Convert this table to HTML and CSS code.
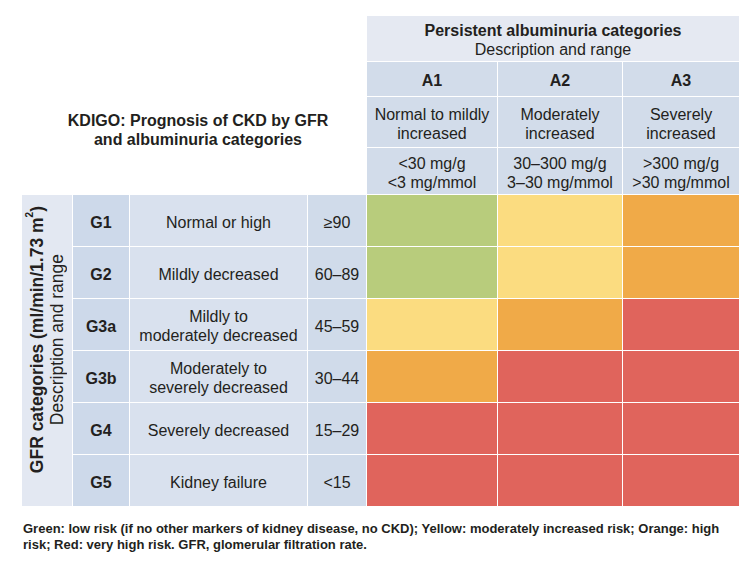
FILE: index.html
```html
<!DOCTYPE html>
<html>
<head>
<meta charset="utf-8">
<link rel="stylesheet" href="styles.css">
</head>
<body>
<div class="page">
  <div class="grid">
    <div class="title"><span>KDIGO: Prognosis of CKD by GFR<br>and albuminuria categories</span></div>
    <div class="h-top"><span><b>Persistent albuminuria categories</b><br>Description and range</span></div>
    <div class="h-a c5"><b>A1</b></div>
    <div class="h-a c6"><b>A2</b></div>
    <div class="h-a c7"><b>A3</b></div>
    <div class="h-a c5"><span>Normal to mildly<br>increased</span></div>
    <div class="h-a c6"><span>Moderately<br>increased</span></div>
    <div class="h-a c7"><span>Severely<br>increased</span></div>
    <div class="h-a c5"><span>&lt;30 mg/g<br>&lt;3 mg/mmol</span></div>
    <div class="h-a c6"><span>30–300 mg/g<br>3–30 mg/mmol</span></div>
    <div class="h-a c7"><span>&gt;300 mg/g<br>&gt;30 mg/mmol</span></div>

    <div class="band"><div class="band-text"><b>GFR categories (ml/min/1.73 m<sup>2</sup>)</b><br>Description and range</div></div>

    <div class="g">G1</div><div class="d">Normal or high</div><div class="r">≥90</div>
    <div class="cell green"></div><div class="cell yellow"></div><div class="cell orange"></div>

    <div class="g">G2</div><div class="d">Mildly decreased</div><div class="r">60–89</div>
    <div class="cell green"></div><div class="cell yellow"></div><div class="cell orange"></div>

    <div class="g">G3a</div><div class="d"><span>Mildly to<br>moderately decreased</span></div><div class="r">45–59</div>
    <div class="cell yellow"></div><div class="cell orange"></div><div class="cell red"></div>

    <div class="g">G3b</div><div class="d"><span>Moderately to<br>severely decreased</span></div><div class="r">30–44</div>
    <div class="cell orange"></div><div class="cell red"></div><div class="cell red"></div>

    <div class="g">G4</div><div class="d">Severely decreased</div><div class="r">15–29</div>
    <div class="cell red"></div><div class="cell red"></div><div class="cell red"></div>

    <div class="g">G5</div><div class="d">Kidney failure</div><div class="r">&lt;15</div>
    <div class="cell red"></div><div class="cell red"></div><div class="cell red"></div>
  </div>
  <p class="note">Green: low risk (if no other markers of kidney disease, no CKD); Yellow: moderately increased risk; Orange: high risk; Red: very high risk. GFR, glomerular filtration rate.</p>
</div>
</body>
</html>
```

FILE: styles.css
```css
html, body {
  margin: 0;
  padding: 0;
  background: #ffffff;
}

body {
  font-family: "Liberation Sans", Arial, sans-serif;
  color: #231f20;
  font-size: 16px;
}

.page {
  padding: 16px 0 0 22px;
}

.grid {
  display: grid;
  grid-template-columns: 50px 56px 177px 58px 130px 124px 116px;
  grid-template-rows: 45px 34px 50px 46px repeat(6, 51px);
  gap: 1px;
  width: 717px;
}

.grid > div {
  display: flex;
  align-items: center;
  justify-content: center;
  text-align: center;
  line-height: 19px;
  padding-top: 3px;
  box-sizing: border-box;
}

.title {
  grid-column: 1 / 5;
  grid-row: 2 / 5;
  font-weight: bold;
  padding-left: 8px;
}

.h-top {
  grid-column: 5 / 8;
  grid-row: 1;
  background: #e5e9f2;
}

.h-a {
  background: #d2dcea;
}

.c5 { grid-column: 5; }
.c6 { grid-column: 6; }
.c7 { grid-column: 7; }

.grid > .band {
  grid-column: 1;
  grid-row: 5 / 11;
  background: #e3e8f2;
  padding-top: 0;
}

.band-text {
  writing-mode: vertical-rl;
  transform: rotate(180deg);
  font-size: 17.5px;
  line-height: 20px;
  white-space: nowrap;
  margin-bottom: 22px;
}

.band-text sup {
  font-size: 10px;
  line-height: 0;
  vertical-align: 7px;
}

.g {
  grid-column: 2;
  background: #cdd9ea;
  font-weight: bold;
}

.d {
  grid-column: 3;
  background: #d9e1ee;
}

.r {
  grid-column: 4;
  background: #d0dbea;
}

.green { background: #b8cc7c; }
.yellow { background: #fbdc80; }
.orange { background: #f0aa48; }
.red { background: #e0645c; }

.note {
  margin: 15px 0 0 1px;
  width: 710px;
  font-family: "Liberation Sans Narrow", "Liberation Sans", Arial, sans-serif;
  font-weight: bold;
  font-size: 13px;
  line-height: 16px;
  color: #231f20;
}
```
